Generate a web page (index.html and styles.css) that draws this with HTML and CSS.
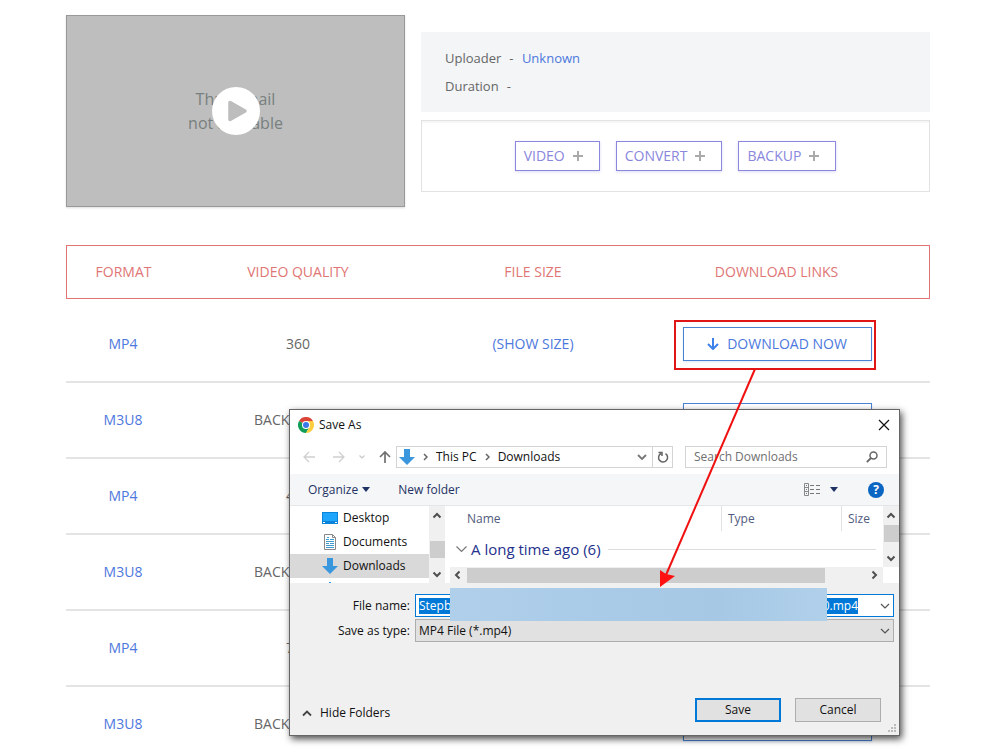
FILE: index.html
```html
<!DOCTYPE html>
<html lang="en">
<head>
<meta charset="utf-8">
<title>Download video</title>
<link rel="stylesheet" href="styles.css">
</head>
<body>
<main class="page">
  <section class="summary">
    <div class="thumb">
      <p class="thumb-text">Thumbnail<br>not available</p>
      <button class="play" type="button" aria-label="Play">
        <svg width="48" height="48" viewBox="0 0 48 48"><path d="M18 15.500v17l15-8.500z" fill="#bdbdbd" stroke="#bdbdbd" stroke-width="3.500" stroke-linejoin="round"/></svg>
      </button>
    </div>
    <div class="details">
      <dl class="meta">
        <div class="meta-row"><dt>Uploader</dt><dd>- <a class="meta-link" href="#">Unknown</a></dd></div>
        <div class="meta-row"><dt>Duration</dt><dd>-</dd></div>
      </dl>
      <div class="actions">
        <button class="action" type="button">VIDEO <svg class="plus" viewBox="0 0 10 10"><path d="M5 0v10M0 5h10"/></svg></button>
        <button class="action" type="button">CONVERT <svg class="plus" viewBox="0 0 10 10"><path d="M5 0v10M0 5h10"/></svg></button>
        <button class="action" type="button">BACKUP <svg class="plus" viewBox="0 0 10 10"><path d="M5 0v10M0 5h10"/></svg></button>
      </div>
    </div>
  </section>

  <table class="formats">
    <colgroup><col class="col-format"><col class="col-quality"><col class="col-size"><col class="col-links"></colgroup>
    <thead>
      <tr><th>FORMAT</th><th>VIDEO QUALITY</th><th>FILE SIZE</th><th>DOWNLOAD LINKS</th></tr>
    </thead>
    <tbody>
      <tr><td><a href="#">MP4</a></td><td>360</td><td><a href="#">(SHOW SIZE)</a></td><td><a class="download" href="#"><svg class="down" viewBox="0 0 12 12"><path d="M6 0v11M1 6l5 5 5-5"/></svg>DOWNLOAD NOW</a></td></tr>
      <tr><td><a href="#">M3U8</a></td><td>BACKUP LINK</td><td></td><td><a class="download" href="#" aria-label="Download"></a></td></tr>
      <tr><td><a href="#">MP4</a></td><td>480</td><td></td><td><a class="download" href="#" aria-label="Download"></a></td></tr>
      <tr><td><a href="#">M3U8</a></td><td>BACKUP LINK</td><td></td><td><a class="download" href="#" aria-label="Download"></a></td></tr>
      <tr><td><a href="#">MP4</a></td><td>720</td><td></td><td><a class="download" href="#" aria-label="Download"></a></td></tr>
      <tr><td><a href="#">M3U8</a></td><td>BACKUP LINK</td><td></td><td><a class="download" href="#" aria-label="Download"></a></td></tr>
    </tbody>
  </table>
</main>

<section class="dialog" role="dialog" aria-labelledby="dialog-title">
  <header class="titlebar">
    <svg class="chrome" viewBox="0 0 48 48">
      <path d="M24 24L3.200 12A24 24 0 0 1 44.800 12z" fill="#db4437"/>
      <path d="M24 24L3.200 12A24 24 0 0 0 24 48L34.400 30z" fill="#0f9d58"/>
      <path d="M24 12H44.800A24 24 0 0 1 24 48L34.400 30z" fill="#ffcd40"/>
      <circle cx="24" cy="24" r="12" fill="#fff"/>
      <circle cx="24" cy="24" r="9" fill="#3b78e7"/>
    </svg>
    <h1 class="title" id="dialog-title">Save As</h1>
    <button class="icon-button" type="button" aria-label="Close"><svg width="12" height="12" viewBox="0 0 12 12"><path d="M1 1l10 10M11 1L1 11" fill="none" stroke="#111" stroke-width="1.200"/></svg></button>
  </header>

  <nav class="navbar">
    <div class="history">
      <button class="icon-button" type="button" aria-label="Back"><svg width="12" height="12" viewBox="0 0 12 12"><path d="M12 6H1M6 1L1 6l5 5" fill="none" stroke="#d0d0d0" stroke-width="1.300"/></svg></button>
      <button class="icon-button" type="button" aria-label="Forward"><svg width="12" height="12" viewBox="0 0 12 12"><path d="M0 6h11M6 1l5 5-5 5" fill="none" stroke="#d0d0d0" stroke-width="1.300"/></svg></button>
      <button class="icon-button" type="button" aria-label="Recent"><svg width="6" height="4" viewBox="0 0 6 4"><path d="M.5.5L3 3 5.500.5" fill="none" stroke="#c8c8c8" stroke-width="1.200"/></svg></button>
      <button class="icon-button" type="button" aria-label="Up"><svg width="12" height="12" viewBox="0 0 12 12"><path d="M6 12V1M1 6l5-5 5 5" fill="none" stroke="#707070" stroke-width="1.700"/></svg></button>
    </div>
    <div class="address">
      <svg width="16" height="16" viewBox="0 0 16 16"><path d="M5 0h6v8h5l-8 8-8-8h5z" fill="#3a96dd"/></svg>
      <svg class="sep" viewBox="0 0 5 8"><path d="M1 1l3 3-3 3"/></svg>
      <a class="crumb" href="#">This PC</a>
      <svg class="sep" viewBox="0 0 5 8"><path d="M1 1l3 3-3 3"/></svg>
      <a class="crumb" href="#">Downloads</a>
      <button class="icon-button drop" type="button" aria-label="Previous locations"><svg width="10" height="7" viewBox="0 0 10 7"><path d="M1 1l4 4 4-4" fill="none" stroke="#777" stroke-width="1.800"/></svg></button>
      <button class="icon-button refresh" type="button" aria-label="Refresh"><svg width="12" height="12" viewBox="0 0 12 12"><path d="M4 2.500A4.500 4.500 0 1 0 8.500 2.700M1.500 1.500h3.500v3.500" fill="none" stroke="#666" stroke-width="1.500"/></svg></button>
    </div>
    <label class="search">
      <input type="text" placeholder="Search Downloads" aria-label="Search Downloads">
      <svg width="12" height="12" viewBox="0 0 12 12"><circle cx="7.500" cy="4.500" r="3.500" fill="none" stroke="#666" stroke-width="1.500"/><path d="M5 7L.8 11.200" stroke="#666" stroke-width="1.800"/></svg>
    </label>
  </nav>

  <div class="toolbar">
    <button class="tool" type="button">Organize <svg width="8" height="5" viewBox="0 0 8 5"><path d="M0 0h8L4 5z" fill="#1e3264"/></svg></button>
    <button class="tool" type="button">New folder</button>
    <button class="tool view" type="button" aria-label="Change view">
      <svg width="16" height="13" viewBox="0 0 16 13"><path d="M.5.5h4v12h-4zM.5 4.500h4M.5 8.500h4" fill="none" stroke="#888"/><path d="M2 2.500h1M2 6.500h1M2 10.500h1M6 2.500h4M12 2.500h4M6 6.500h4M12 6.500h4M6 10.500h4M12 10.500h4" stroke="#777"/></svg>
      <svg width="8" height="5" viewBox="0 0 8 5"><path d="M0 0h8L4 5z" fill="#1e3264"/></svg>
    </button>
    <button class="help" type="button" aria-label="Help">?</button>
  </div>

  <div class="browser">
    <div class="tree">
      <a class="node" href="#"><svg width="16" height="16" viewBox="0 0 16 16"><path d="M0 2h16v12H0z" fill="#0a84d8"/><path d="M1 3h14v8H1z" fill="#1fa5fb"/><path d="M1 12.500h2M13 12.500h2" stroke="#fff"/></svg>Desktop</a>
      <a class="node" href="#"><svg width="16" height="16" viewBox="0 0 16 16"><path d="M2.500.5h8l3 3v12h-11z" fill="#fff" stroke="#888"/><path d="M10.500.5v3h3" fill="none" stroke="#888"/><path d="M4 5.500h3M8 5.500h4M4 7.500h8M4 9.500h3M8 9.500h4M4 11.500h8M4 13.500h8M5 3.500h2" stroke="#3f9bd0"/></svg>Documents</a>
      <a class="node current" href="#"><svg width="16" height="16" viewBox="0 0 16 16"><path d="M5 0h6v8h5l-8 8-8-8h5z" fill="#3a96dd"/></svg>Downloads</a>
      <span class="node-peek"></span>
    </div>
    <div class="vscroll">
      <svg class="chev" viewBox="0 0 10 7"><path d="M1.500 5.500L5 2l3.500 3.500"/></svg>
      <span class="tree-thumb"></span>
      <svg class="chev" viewBox="0 0 10 7"><path d="M1.500 1.500L5 5l3.500-3.500"/></svg>
    </div>
    <div class="list">
      <div class="list-top">
        <div class="list-body">
          <div class="list-head"><span class="h-name">Name</span><span class="h-type">Type</span><span class="h-size">Size</span></div>
          <div class="group"><svg width="11" height="7" viewBox="0 0 11 7"><path d="M.5.5l5 5 5-5" fill="none" stroke="#777" stroke-width="1.200"/></svg><h2 class="group-name">A long time ago (6)</h2><span class="rule"></span></div>
        </div>
        <div class="vscroll">
          <svg class="chev" viewBox="0 0 10 7"><path d="M1.500 5.500L5 2l3.500 3.500"/></svg>
          <span class="list-thumb"></span>
          <svg class="chev" viewBox="0 0 10 7"><path d="M1.500 1.500L5 5l3.500-3.500"/></svg>
        </div>
      </div>
      <div class="hscroll">
        <svg class="hchev" viewBox="0 0 7 10"><path d="M5.500 1.500L2 5l3.500 3.500"/></svg>
        <span class="hthumb"></span>
        <svg class="hchev" viewBox="0 0 7 10"><path d="M1.500 1.500L5 5 1.500 8.500"/></svg>
      </div>
    </div>
  </div>

  <form class="fields">
    <label for="filename">File name:</label>
    <div class="combo name">
      <input id="filename" type="text" value="Stepb"><span class="ext">0.mp4</span>
      <svg class="arrow" viewBox="0 0 10 6"><path d="M1 1l4 4 4-4"/></svg>
      <span class="smear"></span>
    </div>
    <label for="filetype">Save as type:</label>
    <div class="combo type">
      <select id="filetype"><option>MP4 File (*.mp4)</option></select>
      <svg class="arrow" viewBox="0 0 10 6"><path d="M1 1l4 4 4-4"/></svg>
    </div>
  </form>

  <footer class="footer">
    <button class="hide" type="button"><svg width="10" height="7" viewBox="0 0 10 7"><path d="M1 5.500l4-4 4 4" fill="none" stroke="#444" stroke-width="1.800"/></svg>Hide Folders</button>
    <button class="push primary" type="button">Save</button>
    <button class="push" type="button">Cancel</button>
  </footer>
  <svg class="grip" viewBox="0 0 9 9"><path d="M6 0h2v2H6zM3 3h2v2H3zM6 3h2v2H6zM0 6h2v2H0zM3 6h2v2H3zM6 6h2v2H6z" fill="#bbb"/></svg>
</section>

<svg class="callout" width="220" height="270" viewBox="0 0 220 270" aria-hidden="true">
  <path d="M17 1h200v48H17z" fill="none" stroke="#e01515" stroke-width="2"/>
  <path d="M97 49L8 255" stroke="#f01010" stroke-width="2"/>
  <path d="M2 267V250l6 4 9 2z" fill="#f11"/>
</svg>
</body>
</html>
```
FILE: styles.css
```css
* { box-sizing: border-box; }
body {
  position: relative;
  height: 100vh;
  margin: 0;
  overflow: hidden;
  background: #fff;
  color: #666;
  font: 14px/20px "Open Sans", "Noto Sans", sans-serif;
}
button, input, select { margin: 0; padding: 0; border: 0; border-radius: 0; background: none; color: inherit; font: inherit; }
a { color: inherit; text-decoration: none; }
svg { flex: none; display: block; }
dl, dd, p, h1, h2 { margin: 0; font-size: inherit; font-weight: inherit; }

.page { padding: 15px 70px 0 66px; }
.summary { display: flex; gap: 16px; }
.thumb {
  position: relative;
  display: flex; align-items: center; justify-content: center;
  flex: none; width: 339px; height: 192px;
  border: 1px solid #999; background: #bebebe;
  box-shadow: 0 1px 2px #ddd;
}
.thumb-text { color: #78807f; font-size: 16px; line-height: 24px; text-align: center; }
.play { position: absolute; inset: 0; margin: auto; width: 48px; height: 48px; border-radius: 50%; background: #fff; }
.details { flex: 1; padding-top: 17px; }
.meta { height: 80px; padding: 12px 24px; background: #f3f5f7; font-size: 13px; }
.meta-row { display: flex; gap: 8px; line-height: 28px; }
.meta-link { margin-left: 5px; color: #4d78dd; }
.actions {
  display: flex; align-items: center; justify-content: center; gap: 16px;
  height: 72px; margin-top: 8px;
  border: 1px solid #e2e2e2; box-shadow: inset 0 2px 1px #f6f6f6;
}
.action {
  display: flex; align-items: center; gap: 8px;
  height: 30px; padding: 0 16px 0 8px;
  border: 1px solid #8a87dd; color: #8a87dd;
  box-shadow: 0 1px 3px #dcdcf5;
}
.plus { width: 10px; height: 10px; fill: none; stroke: #aaa; stroke-width: 2; }

.formats { width: 100%; margin-top: 38px; border-spacing: 0; table-layout: fixed; text-align: center; }
.col-format { width: 13.2%; }
.col-quality { width: 27.3%; }
.col-size { width: 27.1%; }
.formats th { height: 54px; padding: 0; border: 1px solid #e07575; border-width: 1px 0; color: #e07575; font-weight: 400; }
.formats th:first-child { border-left-width: 1px; }
.formats th:last-child { border-right-width: 1px; padding-right: 26px; }
.formats tbody::before { content: ""; display: block; height: 8px; }
.formats td { height: 76px; padding: 0; border-bottom: 2px solid #e4e4e4; }
.formats td:last-child { padding-right: 26px; }
.formats td a { color: #4d78dd; }
.formats .download {
  display: flex; align-items: center; justify-content: center; gap: 8px;
  width: 189px; height: 34px; margin: 0 auto;
  border: 1px solid #4b83d3; box-shadow: 0 1px 2px #dde9f8;
}
.down { width: 12px; height: 12px; fill: none; stroke: #3d82e8; stroke-width: 2; }

.dialog {
  position: absolute; left: 289px; top: 409px; width: 611px;
  border: 1px solid #666; background: #f0f0f0; color: #111;
  box-shadow: 2px 3px 7px rgba(0, 0, 0, .7);
  font-size: 12px; line-height: 16px;
}
.icon-button { display: flex; align-items: center; justify-content: center; }
.titlebar { display: flex; align-items: center; gap: 5px; height: 29px; padding: 0 9px 0 8px; background: #fff; }
.chrome { width: 16px; height: 16px; }
.title { flex: 1; }
.navbar { display: flex; align-items: center; height: 35px; padding: 1px 12px 0 13px; background: #fff; }
.history { display: flex; align-items: center; width: 93px; gap: 18px; }
.history .icon-button:nth-child(3) { margin: 0 -4px; }
.address { display: flex; align-items: center; flex: 1; height: 22px; padding-left: 2px; border: 1px solid #d4d4d4; }
.sep { width: 5px; height: 8px; margin: 0 8px; fill: none; stroke: #666; stroke-width: 1.500; }
.drop { margin-left: auto; width: 20px; height: 20px; }
.refresh { width: 20px; height: 20px; border-left: 1px solid #d4d4d4; }
.search { display: flex; align-items: center; width: 202px; height: 22px; margin-left: 12px; padding: 0 8px; border: 1px solid #d4d4d4; }
.search input { flex: 1; min-width: 0; }
.search input::placeholder { color: #707070; opacity: 1; }
.toolbar { display: flex; align-items: center; height: 32px; padding: 0 15px 0 18px; background: #f5f6f7; border-bottom: 1px solid #e4e6e8; color: #1e3264; }
.tool { display: flex; align-items: center; gap: 4px; margin-right: 28px; }
.view { gap: 10px; margin: 0 30px 0 auto; }
.help { width: 16px; height: 16px; border-radius: 50%; background: #0a66c2; color: #fff; font-weight: 700; }

.browser { display: flex; height: 77px; background: #fff; }
.tree { width: 139px; overflow: hidden; }
.node { display: flex; align-items: center; gap: 5px; height: 24px; padding-left: 32px; }
.current { background: #d9d9d9; }
.node-peek { display: block; width: 2px; height: 1px; margin: 4px 0 0 39px; background: #3a96dd; }
.vscroll { display: flex; flex-direction: column; align-items: center; justify-content: space-between; width: 16px; padding: 6px 0 5px; background: #f0f0f0; }
.chev { width: 10px; height: 7px; }
.chev, .hchev { fill: none; stroke: #505050; stroke-width: 2; }
.tree-thumb { width: 15px; height: 17px; margin-top: 8px; background: #cdcdcd; }
.list-thumb { width: 15px; height: 17px; margin-bottom: 8px; background: #cdcdcd; }
.list { flex: 1; padding-left: 5px; }
.list-top { display: flex; height: 61px; }
.list-body { flex: 1; }
.list-head { display: flex; height: 25px; padding-left: 17px; line-height: 26px; color: #4f5b7d; }
.h-name { flex: 1; }
.h-type { width: 120px; padding-left: 6px; border-left: 1px solid #e2e2e2; }
.h-size { width: 42px; padding-left: 6px; border-left: 1px solid #e2e2e2; }
.group { display: flex; align-items: center; height: 36px; padding: 0 7px 0 6px; gap: 4px; color: #24318c; }
.group-name { font-size: 15px; line-height: 20px; }
.rule { flex: 1; height: 1px; margin-left: 3px; background: #dcdcdc; }
.hscroll { display: flex; align-items: center; height: 16px; margin-right: 16px; padding: 0 5px 0 4px; background: #f0f0f0; }
.hchev { width: 7px; height: 10px; }
.hthumb { flex: 1; height: 15px; margin: 0 46px 0 6px; background: #cdcdcd; }

.fields { display: grid; grid-template-columns: 120px 1fr; align-items: center; gap: 2px 5px; padding: 11px 5px 0 0; }
.fields label { text-align: right; }
.combo { position: relative; display: flex; align-items: center; height: 23px; padding: 0 3px; border: 1px solid #0078d7; background: #fff; }
.name { z-index: 1; }
.name input { flex: 1; min-width: 0; height: 16px; background: #0078d7; color: #fff; }
.ext { margin-right: 22px; background: #0078d7; color: #fff; }
.arrow { width: 10px; height: 6px; fill: none; stroke: #555; stroke-width: 1.200; }
.smear { position: absolute; left: 34px; right: 66px; top: -7px; height: 33px; background: linear-gradient(90deg, #b0cfea, #a9cbe8 40%, #a6c8e5 70%, #b0d0ea); }
.type { border-color: #adadad; background: #e1e1e1; }
.type select { flex: 1; appearance: none; }
.footer { display: flex; align-items: center; gap: 14px; padding: 56px 18px 13px 12px; }
.hide { display: flex; align-items: center; gap: 8px; margin: 6px auto 0 0; }
.push { width: 86px; height: 24px; border: 1px solid #adadad; background: #e1e1e1; }
.primary { border: 2px solid #0078d7; }
.grip { position: absolute; right: 2px; bottom: 2px; width: 9px; height: 9px; }
.callout { position: absolute; left: 658px; top: 320px; }
```
